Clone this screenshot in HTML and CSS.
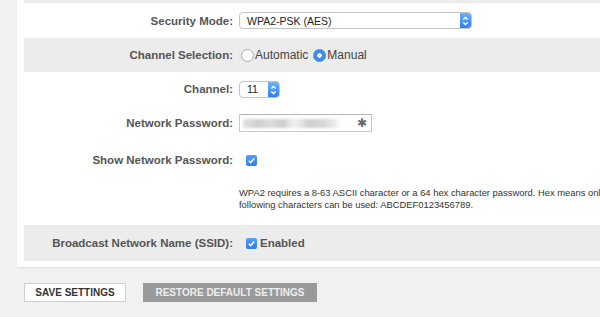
FILE: index.html
```html
<!DOCTYPE html>
<html lang="en">
<head>
  <meta charset="UTF-8" />
  <meta name="viewport" content="width=device-width, initial-scale=1.0" />
  <title>Wireless Settings</title>
  <link rel="stylesheet" href="styles.css">
</head>

<body>

<div class="panel">
  <div class="row shade strip"></div>

  <div class="row row-security">
    <label class="field-label">Security Mode:</label>
    <div class="field">
      <div class="select select-wide">
        <span class="select-value">WPA2-PSK (AES)</span>
        <span class="select-arrows">
          <svg width="11" height="16" viewBox="0 0 11 16"><path d="M3.3 6.6 L5.5 4.4 L7.7 6.6 M3.3 9.4 L5.5 11.6 L7.7 9.4" fill="none" stroke="#fff" stroke-width="1.4" /></svg>
        </span>
      </div>
    </div>
  </div>

  <div class="row shade">
    <label class="field-label">Channel Selection:</label>
    <div class="field">
      <span class="radio"></span><span class="option-text">Automatic</span>
      <span class="radio checked"></span><span class="option-text">Manual</span>
    </div>
  </div>

  <div class="row">
    <label class="field-label">Channel:</label>
    <div class="field">
      <div class="select select-small">
        <span class="select-value">11</span>
        <span class="select-arrows">
          <svg width="11" height="16" viewBox="0 0 11 16"><path d="M3.3 6.6 L5.5 4.4 L7.7 6.6 M3.3 9.4 L5.5 11.6 L7.7 9.4" fill="none" stroke="#fff" stroke-width="1.4" /></svg>
        </span>
      </div>
    </div>
  </div>

  <div class="row">
    <label class="field-label">Network Password:</label>
    <div class="field">
      <div class="password">
        <span class="blurred"></span>
        <span class="star">&#10033;</span>
      </div>
    </div>
  </div>

  <div class="row row-show">
    <label class="field-label">Show Network Password:</label>
    <div class="field">
      <span class="checkbox">
        <svg width="11" height="11" viewBox="0 0 11 11"><path d="M2.8 5.8 L4.6 7.6 L8.2 3.4" fill="none" stroke="#fff" stroke-width="1.5" /></svg>
      </span>
    </div>
  </div>

  <div class="row row-help">
    <div class="field-label"></div>
    <p class="help">WPA2 requires a 8-63 ASCII character or a 64 hex character password. Hex means only the following characters can be used: ABCDEF0123456789.</p>
  </div>

  <div class="row shade row-broadcast">
    <label class="field-label">Broadcast Network Name (SSID):</label>
    <div class="field">
      <span class="checkbox">
        <svg width="11" height="11" viewBox="0 0 11 11"><path d="M2.8 5.8 L4.6 7.6 L8.2 3.4" fill="none" stroke="#fff" stroke-width="1.5" /></svg>
      </span>
      <span class="option-text bold">Enabled</span>
    </div>
  </div>
</div>

<div class="actions">
  <button class="btn btn-save">SAVE SETTINGS</button>
  <button class="btn btn-restore">RESTORE DEFAULT SETTINGS</button>
</div>

</body>
</html>
```

FILE: styles.css
```css
* {
  margin: 0;
  padding: 0;
  box-sizing: border-box;
}

body, html {
  height: 100%;
  overflow: hidden;
}

body {
  background-color: #f1f1f1;
  font-family: 'Liberation Sans', Arial, sans-serif;
  font-size: 11.5px;
  color: #444;
}

.panel {
  width: 720px;
  margin-left: 17px;
  padding: 0 7px 6px 7px;
  background-color: #fff;
  box-shadow: 0 1px 1px rgba(0, 0, 0, 0.06);
}

.row {
  display: flex;
  align-items: center;
  height: 34px;
}

.row.shade {
  background-color: #ececec;
}

.row.strip {
  height: 3px;
}

.row-security {
  height: 35px;
}

.row-show {
  height: 40px;
}

.row-help {
  height: 45px;
  align-items: flex-start;
  padding-top: 7px;
}

.row-broadcast {
  height: 36px;
}

.field-label {
  width: 209px;
  flex-shrink: 0;
  text-align: right;
  font-weight: bold;
  color: #555;
}

.field {
  display: flex;
  align-items: center;
  margin-left: 6px;
}

/* fake mac style selects */
.select {
  display: flex;
  align-items: center;
  height: 17px;
  background-color: #fff;
  border: 1px solid #c4c4c4;
  border-radius: 4px;
  overflow: hidden;
}

.select-wide {
  width: 233px;
}

.select-small {
  width: 41px;
}

.select-value {
  flex: 1;
  padding-left: 7px;
  font-size: 10.5px;
  color: #222;
}

.select-arrows {
  display: flex;
  width: 11px;
  height: 100%;
  background: linear-gradient(#6db0fa, #2f80f0);
}

.radio {
  width: 13px;
  height: 13px;
  margin-left: 2px;
  border: 1px solid #a8a8a8;
  border-radius: 50%;
  background-color: #fff;
}

.radio.checked {
  margin-left: 5px;
  border-color: #3a8cf2;
  background: radial-gradient(circle, #fff 0 2px, #3a8cf2 2.5px);
}

.option-text {
  margin-left: 1px;
  font-size: 12px;
  color: #444;
}

.option-text.bold {
  margin-left: 3px;
  font-size: 11.5px;
  font-weight: bold;
  color: #555;
}

.password {
  display: flex;
  align-items: center;
  width: 133px;
  height: 18px;
  border: 1px solid #c9c9c9;
  border-top-color: #b5b5b5;
  padding: 0 4px 0 3px;
}

.blurred {
  width: 96px;
  height: 9px;
  background: linear-gradient(90deg, #e2e2e2 0, #d0d0d0 15%, #dcdcdc 30%, #cdcdcd 42%, #f0f0f0 52%, #eaeaea 58%, #d0d0d0 68%, #d8d8d8 85%, #f6f6f6 100%);
  filter: blur(1px);
}

.star {
  margin-left: auto;
  font-family: 'DejaVu Sans', sans-serif;
  font-size: 12px;
  color: #666;
}

.checkbox {
  display: flex;
  width: 11px;
  height: 11px;
  margin-left: 7px;
  border-radius: 2px;
  background: linear-gradient(#55a0f7, #2c7ded);
}

.help {
  width: 410px;
  flex-shrink: 0;
  margin-left: 6px;
  font-size: 9.4px;
  line-height: 12px;
  color: #333;
}

.actions {
  display: flex;
  gap: 17px;
  margin-top: 16px;
  padding-left: 24px;
}

.btn {
  height: 19px;
  font-family: 'Liberation Sans', Arial, sans-serif;
  font-size: 10px;
  font-weight: bold;
  cursor: pointer;
}

.btn-save {
  width: 102px;
  background-color: #fff;
  border: 1px solid #cfcfcf;
  color: #333;
}

.btn-restore {
  width: 174px;
  background-color: #9a9a9a;
  border: none;
  color: #eee;
}
```
